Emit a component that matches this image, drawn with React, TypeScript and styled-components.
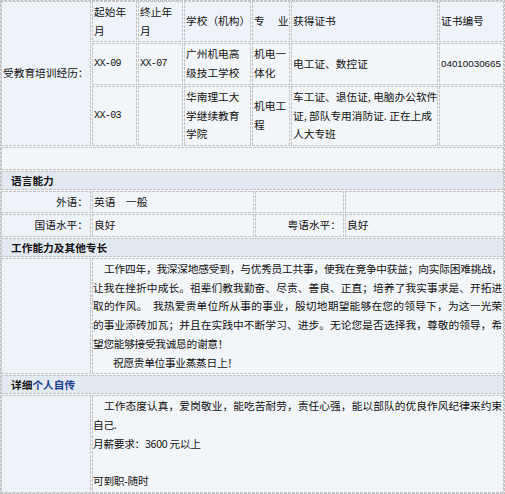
import React from "react";
import styled, { createGlobalStyle, css } from "styled-components";

const DASH = "#c4c4c4";
const GAP_BG = "#f4f6f9";
const LABEL_BG = "#eef3fa";
const VALUE_BG = "#f3f6f9";
const HEAD_BG = "#e3e9f1";

const dashedBox = (bg: string) => css`
  background:
    linear-gradient(to right, ${DASH} 3px, transparent 3px) 0 0 / 4px 1px repeat-x,
    linear-gradient(to right, ${DASH} 3px, transparent 3px) 0 100% / 4px 1px repeat-x,
    linear-gradient(to bottom, ${DASH} 3px, transparent 3px) 0 0 / 1px 4px repeat-y,
    linear-gradient(to bottom, ${DASH} 3px, transparent 3px) 100% 0 / 1px 4px repeat-y,
    ${bg};
`;

const GlobalStyle = createGlobalStyle`
  html, body { margin: 0; padding: 0; background: ${GAP_BG}; }
  body {
    font-family: "Noto Sans CJK SC", "Noto Sans", sans-serif;
    font-size: 10.7px;
    line-height: 18.7px;
    color: #111;
  }
  * { box-sizing: border-box; }
`;

const Sheet = styled.div`
  ${dashedBox(GAP_BG)};
  width: 505px;
  padding: 1px;
  display: grid;
  grid-template-columns: 90px 162px 89px 1fr;
  gap: 1px;
`;

const Label = styled.div<{ $align?: "left" | "right"; $bg?: string }>`
  ${(p) => dashedBox(p.$bg ?? LABEL_BG)};
  padding: 2px 3px 2px 2px;
  display: flex;
  align-items: center;
  justify-content: ${(p) => (p.$align === "left" ? "flex-start" : "flex-end")};
  white-space: nowrap;
`;

const Value = styled.div<{ $span?: number }>`
  ${dashedBox(VALUE_BG)};
  padding: 2px 2px;
  grid-column: span ${(p) => p.$span ?? 1};
  display: flex;
  align-items: center;
  min-height: 22.7px;
`;

const SectionHead = styled.div`
  ${dashedBox(HEAD_BG)};
  grid-column: 1 / -1;
  padding: 1px 10px;
  font-weight: 700;
  line-height: 17px;
`;

const Blue = styled.span`
  color: #1d3f8f;
`;

const EduHolder = styled.div`
  grid-column: span 3;
  display: grid;
  grid-template-columns: 45px 45px 67px 38px 147px 1fr;
  gap: 1px;
`;

const EduCell = styled.div<{ $head?: boolean; $nowrap?: boolean }>`
  ${(p) => dashedBox(p.$head ? LABEL_BG : VALUE_BG)};
  padding: 2px 2px;
  display: flex;
  align-items: center;
  white-space: ${(p) => (p.$nowrap ? "nowrap" : "normal")};
`;

const Mono = styled.span`
  font-family: "Liberation Mono", monospace;
  font-size: 10px;
  letter-spacing: -0.6px;
`;

const Digits = styled.span`
  font-family: "Liberation Sans", Arial, sans-serif;
  font-size: 9.8px;
`;

const TextCell = styled.div`
  ${dashedBox(VALUE_BG)};
  grid-column: span 3;
  padding: 2px 1px 2px 1px;
`;

const Line = styled.div<{ $indent?: number; $fill?: boolean }>`
  white-space: pre;
  padding-left: ${(p) => p.$indent ?? 0}px;
  padding-right: 1px;
  letter-spacing: -0.3px;
  text-align: justify;
  text-align-last: ${(p) => (p.$fill ? "justify" : "left")};
  min-height: 18.7px;
`;

const eduRows = [
  {
    start: "XX-09",
    end: "XX-07",
    school: "广州机电高级技工学校",
    major: "机电一体化",
    cert: ["电工证、数控证"],
    no: "04010030665",
  },
  {
    start: "XX-03",
    end: "",
    school: "华南理工大学继续教育学院",
    major: "机电工程",
    cert: ["车工证、退伍证, 电脑办公软件", "证, 部队专用消防证. 正在上成", "人大专班"],
    no: "",
  },
];

const workLines: { text: string; indent?: number; fill?: boolean }[] = [
  { text: "工作四年，我深深地感受到，与优秀员工共事，使我在竞争中获益；向实际困难挑战，", indent: 11, fill: true },
  { text: "让我在挫折中成长。祖辈们教我勤奋、尽责、善良、正直；培养了我实事求是、开拓进", fill: true },
  { text: "取的作风。  我热爱贵单位所从事的事业，殷切地期望能够在您的领导下，为这一光荣", fill: true },
  { text: "的事业添砖加瓦；并且在实践中不断学习、进步。无论您是否选择我，尊敬的领导，希", fill: true },
  { text: "望您能够接受我诚恳的谢意！" },
  { text: "祝愿贵单位事业蒸蒸日上！", indent: 20 },
];

const bioLines: { text: string; indent?: number; fill?: boolean }[] = [
  { text: "工作态度认真，爱岗敬业，能吃苦耐劳，责任心强，能以部队的优良作风纪律来约束", indent: 11, fill: true },
  { text: "自己." },
  { text: "月薪要求：3600 元以上" },
  { text: "" },
  { text: "可到职-随时" },
];

export default function App() {
  return (
    <>
      <GlobalStyle />
      <Sheet>
        <Label $align="left">受教育培训经历：</Label>
        <EduHolder>
          <EduCell $head>起始年月</EduCell>
          <EduCell $head>终止年月</EduCell>
          <EduCell $head $nowrap>学校（机构）</EduCell>
          <EduCell $head $nowrap>专　 业</EduCell>
          <EduCell $head>获得证书</EduCell>
          <EduCell $head>证书编号</EduCell>
          {eduRows.map((r, i) => (
            <React.Fragment key={i}>
              <EduCell>
                <Mono>{r.start}</Mono>
              </EduCell>
              <EduCell>
                <Mono>{r.end}</Mono>
              </EduCell>
              <EduCell>{r.school}</EduCell>
              <EduCell>{r.major}</EduCell>
              <EduCell $nowrap>
                <div>
                  {r.cert.map((c, j) => (
                    <div key={j}>{c}</div>
                  ))}
                </div>
              </EduCell>
              <EduCell $nowrap>
                <Digits>{r.no}</Digits>
              </EduCell>
            </React.Fragment>
          ))}
        </EduHolder>

        <Value $span={4}>{"\u00a0"}</Value>

        <SectionHead>语言能力</SectionHead>
        <Label>外语：</Label>
        <Value>英语　一般</Value>
        <Value />
        <Value />
        <Label>国语水平：</Label>
        <Value>良好</Value>
        <Label $bg={VALUE_BG}>粤语水平：</Label>
        <Value>良好</Value>

        <SectionHead>工作能力及其他专长</SectionHead>
        <Label />
        <TextCell>
          {workLines.map((l, i) => (
            <Line key={i} $indent={l.indent} $fill={l.fill}>
              {l.text}
            </Line>
          ))}
        </TextCell>

        <SectionHead>
          详细<Blue>个人自传</Blue>
        </SectionHead>
        <Label />
        <TextCell>
          {bioLines.map((l, i) => (
            <Line key={i} $indent={l.indent} $fill={l.fill}>
              {l.text}
            </Line>
          ))}
        </TextCell>
      </Sheet>
    </>
  );
}
